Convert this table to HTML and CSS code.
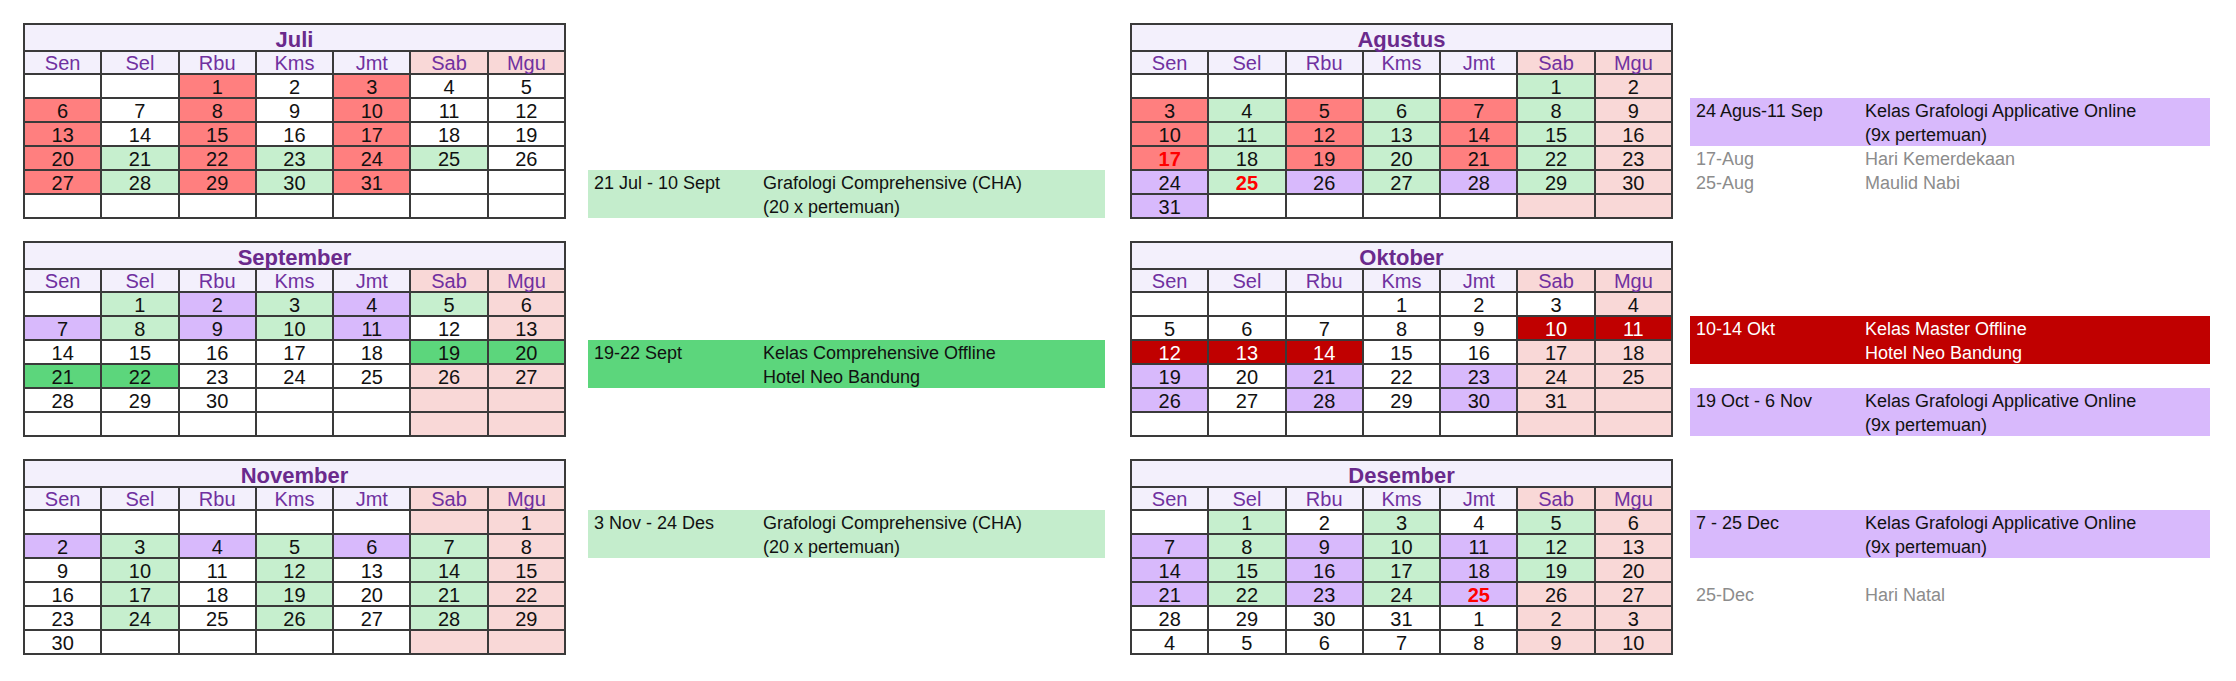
FILE: index.html
```html
<!DOCTYPE html>
<html lang="id">
<head>
<meta charset="utf-8">
<title>Kalender Kelas Grafologi</title>
<link rel="stylesheet" href="styles.css">
</head>
<body>
<main class="page">

  <section class="block">
    <div class="cal">
      <div class="ttl">Juli</div>
      <div class="dh">Sen</div><div class="dh">Sel</div><div class="dh">Rbu</div><div class="dh">Kms</div><div class="dh">Jmt</div><div class="dh we">Sab</div><div class="dh we">Mgu</div>
      <div class="d"></div><div class="d"></div><div class="d r">1</div><div class="d">2</div><div class="d r">3</div><div class="d">4</div><div class="d">5</div>
      <div class="d r">6</div><div class="d">7</div><div class="d r">8</div><div class="d">9</div><div class="d r">10</div><div class="d">11</div><div class="d">12</div>
      <div class="d r">13</div><div class="d">14</div><div class="d r">15</div><div class="d">16</div><div class="d r">17</div><div class="d">18</div><div class="d">19</div>
      <div class="d r">20</div><div class="d g">21</div><div class="d r">22</div><div class="d g">23</div><div class="d r">24</div><div class="d g">25</div><div class="d">26</div>
      <div class="d r">27</div><div class="d g">28</div><div class="d r">29</div><div class="d g">30</div><div class="d r">31</div><div class="d"></div><div class="d"></div>
      <div class="d"></div><div class="d"></div><div class="d"></div><div class="d"></div><div class="d"></div><div class="d"></div><div class="d"></div>
    </div>
    <div class="events mid">
      <div class="ev lg at5 two"><span class="dt">21 Jul - 10 Sept</span><span class="ds">Grafologi Comprehensive (CHA)<br>(20 x pertemuan)</span></div>
    </div>
    <div class="cal right">
      <div class="ttl">Agustus</div>
      <div class="dh">Sen</div><div class="dh">Sel</div><div class="dh">Rbu</div><div class="dh">Kms</div><div class="dh">Jmt</div><div class="dh we">Sab</div><div class="dh we">Mgu</div>
      <div class="d"></div><div class="d"></div><div class="d"></div><div class="d"></div><div class="d"></div><div class="d g">1</div><div class="d w">2</div>
      <div class="d r">3</div><div class="d g">4</div><div class="d r">5</div><div class="d g">6</div><div class="d r">7</div><div class="d g">8</div><div class="d w">9</div>
      <div class="d r">10</div><div class="d g">11</div><div class="d r">12</div><div class="d g">13</div><div class="d r">14</div><div class="d g">15</div><div class="d w">16</div>
      <div class="d r hol">17</div><div class="d g">18</div><div class="d r">19</div><div class="d g">20</div><div class="d r">21</div><div class="d g">22</div><div class="d w">23</div>
      <div class="d p">24</div><div class="d g hol">25</div><div class="d p">26</div><div class="d g">27</div><div class="d p">28</div><div class="d g">29</div><div class="d w">30</div>
      <div class="d p">31</div><div class="d"></div><div class="d"></div><div class="d"></div><div class="d"></div><div class="d w"></div><div class="d w"></div>
    </div>
    <div class="events side">
      <div class="ev pu at2 two"><span class="dt">24 Agus-11 Sep</span><span class="ds">Kelas Grafologi Applicative Online<br>(9x pertemuan)</span></div>
      <div class="ev hd at4"><span class="dt">17-Aug</span><span class="ds">Hari Kemerdekaan</span></div>
      <div class="ev hd at5"><span class="dt">25-Aug</span><span class="ds">Maulid Nabi</span></div>
    </div>
  </section>

  <section class="block">
    <div class="cal">
      <div class="ttl">September</div>
      <div class="dh">Sen</div><div class="dh">Sel</div><div class="dh">Rbu</div><div class="dh">Kms</div><div class="dh">Jmt</div><div class="dh we">Sab</div><div class="dh we">Mgu</div>
      <div class="d"></div><div class="d g">1</div><div class="d p">2</div><div class="d g">3</div><div class="d p">4</div><div class="d g">5</div><div class="d w">6</div>
      <div class="d p">7</div><div class="d g">8</div><div class="d p">9</div><div class="d g">10</div><div class="d p">11</div><div class="d">12</div><div class="d w">13</div>
      <div class="d">14</div><div class="d">15</div><div class="d">16</div><div class="d">17</div><div class="d">18</div><div class="d bg">19</div><div class="d bg">20</div>
      <div class="d bg">21</div><div class="d bg">22</div><div class="d">23</div><div class="d">24</div><div class="d">25</div><div class="d w">26</div><div class="d w">27</div>
      <div class="d">28</div><div class="d">29</div><div class="d">30</div><div class="d"></div><div class="d"></div><div class="d w"></div><div class="d w"></div>
      <div class="d"></div><div class="d"></div><div class="d"></div><div class="d"></div><div class="d"></div><div class="d w"></div><div class="d w"></div>
    </div>
    <div class="events mid">
      <div class="ev bgr at3 two"><span class="dt">19-22 Sept</span><span class="ds">Kelas Comprehensive Offline<br>Hotel Neo Bandung</span></div>
    </div>
    <div class="cal right">
      <div class="ttl">Oktober</div>
      <div class="dh">Sen</div><div class="dh">Sel</div><div class="dh">Rbu</div><div class="dh">Kms</div><div class="dh">Jmt</div><div class="dh we">Sab</div><div class="dh we">Mgu</div>
      <div class="d"></div><div class="d"></div><div class="d"></div><div class="d">1</div><div class="d">2</div><div class="d">3</div><div class="d w">4</div>
      <div class="d">5</div><div class="d">6</div><div class="d">7</div><div class="d">8</div><div class="d">9</div><div class="d dr">10</div><div class="d dr">11</div>
      <div class="d dr">12</div><div class="d dr">13</div><div class="d dr">14</div><div class="d">15</div><div class="d">16</div><div class="d w">17</div><div class="d w">18</div>
      <div class="d p">19</div><div class="d">20</div><div class="d p">21</div><div class="d">22</div><div class="d p">23</div><div class="d w">24</div><div class="d w">25</div>
      <div class="d p">26</div><div class="d">27</div><div class="d p">28</div><div class="d">29</div><div class="d p">30</div><div class="d w">31</div><div class="d w"></div>
      <div class="d"></div><div class="d"></div><div class="d"></div><div class="d"></div><div class="d"></div><div class="d w"></div><div class="d w"></div>
    </div>
    <div class="events side">
      <div class="ev drk at2 two"><span class="dt">10-14 Okt</span><span class="ds">Kelas Master Offline<br>Hotel Neo Bandung</span></div>
      <div class="ev pu at5 two"><span class="dt">19 Oct - 6 Nov</span><span class="ds">Kelas Grafologi Applicative Online<br>(9x pertemuan)</span></div>
    </div>
  </section>

  <section class="block">
    <div class="cal">
      <div class="ttl">November</div>
      <div class="dh">Sen</div><div class="dh">Sel</div><div class="dh">Rbu</div><div class="dh">Kms</div><div class="dh">Jmt</div><div class="dh we">Sab</div><div class="dh we">Mgu</div>
      <div class="d"></div><div class="d"></div><div class="d"></div><div class="d"></div><div class="d"></div><div class="d w"></div><div class="d w">1</div>
      <div class="d p">2</div><div class="d g">3</div><div class="d p">4</div><div class="d g">5</div><div class="d p">6</div><div class="d g">7</div><div class="d w">8</div>
      <div class="d">9</div><div class="d g">10</div><div class="d">11</div><div class="d g">12</div><div class="d">13</div><div class="d g">14</div><div class="d w">15</div>
      <div class="d">16</div><div class="d g">17</div><div class="d">18</div><div class="d g">19</div><div class="d">20</div><div class="d g">21</div><div class="d w">22</div>
      <div class="d">23</div><div class="d g">24</div><div class="d">25</div><div class="d g">26</div><div class="d">27</div><div class="d g">28</div><div class="d w">29</div>
      <div class="d">30</div><div class="d"></div><div class="d"></div><div class="d"></div><div class="d"></div><div class="d w"></div><div class="d w"></div>
    </div>
    <div class="events mid">
      <div class="ev lg at1 two"><span class="dt">3 Nov - 24 Des</span><span class="ds">Grafologi Comprehensive (CHA)<br>(20 x pertemuan)</span></div>
    </div>
    <div class="cal right">
      <div class="ttl">Desember</div>
      <div class="dh">Sen</div><div class="dh">Sel</div><div class="dh">Rbu</div><div class="dh">Kms</div><div class="dh">Jmt</div><div class="dh we">Sab</div><div class="dh we">Mgu</div>
      <div class="d"></div><div class="d g">1</div><div class="d">2</div><div class="d g">3</div><div class="d">4</div><div class="d g">5</div><div class="d w">6</div>
      <div class="d p">7</div><div class="d g">8</div><div class="d p">9</div><div class="d g">10</div><div class="d p">11</div><div class="d g">12</div><div class="d w">13</div>
      <div class="d p">14</div><div class="d g">15</div><div class="d p">16</div><div class="d g">17</div><div class="d p">18</div><div class="d g">19</div><div class="d w">20</div>
      <div class="d p">21</div><div class="d g">22</div><div class="d p">23</div><div class="d g">24</div><div class="d p hol">25</div><div class="d w">26</div><div class="d w">27</div>
      <div class="d">28</div><div class="d">29</div><div class="d">30</div><div class="d">31</div><div class="d">1</div><div class="d w">2</div><div class="d w">3</div>
      <div class="d">4</div><div class="d">5</div><div class="d">6</div><div class="d">7</div><div class="d">8</div><div class="d w">9</div><div class="d w">10</div>
    </div>
    <div class="events side">
      <div class="ev pu at1 two"><span class="dt">7 - 25 Dec</span><span class="ds">Kelas Grafologi Applicative Online<br>(9x pertemuan)</span></div>
      <div class="ev hd at4"><span class="dt">25-Dec</span><span class="ds">Hari Natal</span></div>
    </div>
  </section>

</main>
</body>
</html>
```

FILE: styles.css
```css
html, body {
  margin: 0;
  padding: 0;
  background: #ffffff;
}

body {
  font-family: "Liberation Sans", Arial, sans-serif;
  color: #000000;
}

.page {
  display: flex;
  flex-direction: column;
  gap: 22px;
  padding: 23px 0 0 23px;
}

.block {
  display: flex;
  align-items: flex-start;
}

/* ---------- calendar ---------- */
.cal {
  width: 543px;
  box-sizing: border-box;
  display: grid;
  grid-template-columns: repeat(7, 1fr);
  grid-template-rows: 25px 21px repeat(6, 22px);
  gap: 2px;
  padding: 2px;
  background: #3a3a3a;
}

.cal.right {
  margin-left: 25px;
}

.ttl {
  grid-column: 1 / -1;
  background: #f3f0fc;
  color: #6a2a8c;
  font-weight: bold;
  font-size: 22px;
  line-height: 25px;
  padding-top: 2px;
  box-sizing: border-box;
  text-align: center;
}

.dh {
  background: #f3f0fc;
  color: #7030a0;
  font-size: 20px;
  line-height: 21px;
  padding-top: 1px;
  box-sizing: border-box;
  text-align: center;
  overflow: visible;
}

.dh.we {
  background: #f9d8d7;
}

.d {
  background: #ffffff;
  font-size: 20px;
  line-height: 22px;
  padding-top: 1px;
  box-sizing: border-box;
  text-align: center;
  color: #111111;
}

.d.r { background: #ff7f7f; }
.d.g { background: #c6efce; }
.d.bg { background: #5cd67c; }
.d.p { background: #d8b9fc; }
.d.w { background: #f9d8d7; }
.d.dr { background: #c00000; color: #ffffff; }
.d.hol { color: #ff0000; font-weight: bold; }

/* ---------- event lists ---------- */
.events {
  display: grid;
  grid-template-rows: 51px repeat(6, 24px);
  height: 196px;
}

.events.mid {
  width: 517px;
  margin-left: 22px;
}

.events.side {
  width: 520px;
  margin-left: 17px;
}

.ev {
  display: grid;
  grid-template-columns: 169px 1fr;
  padding: 1px 0 0 6px;
  box-sizing: border-box;
  font-size: 18px;
  line-height: 24px;
  color: #111111;
  overflow: visible;
  white-space: nowrap;
}

.at1 { grid-row-start: 2; }
.at2 { grid-row-start: 3; }
.at3 { grid-row-start: 4; }
.at4 { grid-row-start: 5; }
.at5 { grid-row-start: 6; }
.at6 { grid-row-start: 7; }
.two { grid-row-end: span 2; }

.ev.lg { background: #c4edcc; }
.ev.bgr { background: #5cd67c; }
.ev.pu { background: #d8b9fc; }
.ev.drk { background: #c00000; color: #ffffff; }
.ev.hd { color: #8c8c8c; }
```
